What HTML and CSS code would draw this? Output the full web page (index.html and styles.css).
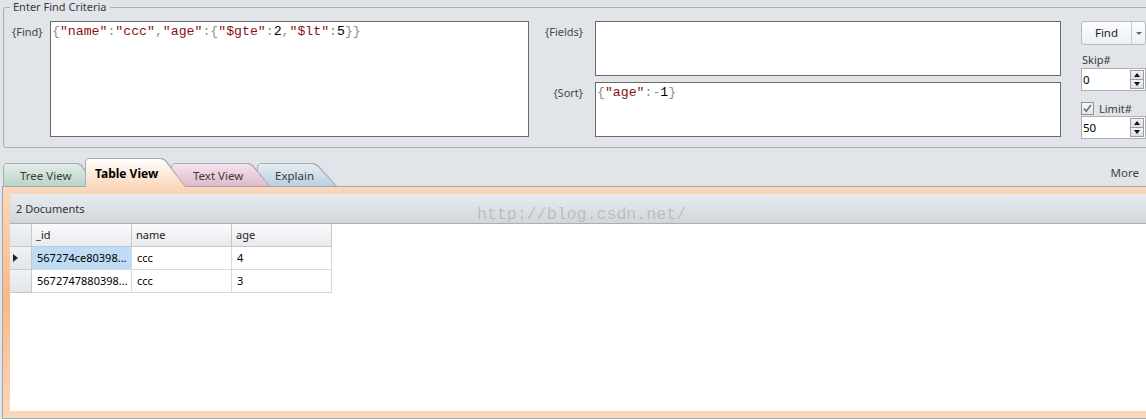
FILE: index.html
```html
<!DOCTYPE html>
<html lang="en">
<head>
<meta charset="utf-8">
<title>Find</title>
<link rel="stylesheet" href="styles.css">
</head>
<body>
<fieldset class="criteria">
  <legend>Enter Find Criteria</legend>
  <div class="criteria-row">
    <div class="find-label">{Find}</div>
    <div class="code-box find-box"><span class="p">{</span><span class="s">"name"</span><span class="p">:</span><span class="s">"ccc"</span><span class="p">,</span><span class="s">"age"</span><span class="p">:{</span><span class="s">"$gte"</span><span class="p">:</span><span class="n">2</span><span class="p">,</span><span class="s">"$lt"</span><span class="p">:</span><span class="n">5</span><span class="p">}}</span></div>
    <div class="side">
      <div class="side-row">
        <div class="side-label">{Fields}</div>
        <div class="code-box side-box"></div>
      </div>
      <div class="side-row">
        <div class="side-label">{Sort}</div>
        <div class="code-box side-box"><span class="p">{</span><span class="s">"age"</span><span class="p">:-</span><span class="n">1</span><span class="p">}</span></div>
      </div>
    </div>
    <div class="controls">
      <div class="find-btn">
        <span class="find-main">Find</span>
        <span class="find-drop"><span class="drop-arrow"></span></span>
      </div>
      <div class="ctl-label">Skip#</div>
      <div class="spin">
        <span class="spin-val">0</span>
        <span class="spin-btns"><span class="spin-b"><span class="tri-up"></span></span><span class="spin-b"><span class="tri-down"></span></span></span>
      </div>
      <div class="limit-row">
        <span class="check"><svg width="11" height="11" viewBox="0 0 11 11"><path d="M2 5.5 L4.3 8.2 L9 2" fill="none" stroke="#6f6f6f" stroke-width="1.6"/></svg></span>
        <span class="limit-text">Limit#</span>
      </div>
      <div class="spin">
        <span class="spin-val">50</span>
        <span class="spin-btns"><span class="spin-b"><span class="tri-up"></span></span><span class="spin-b"><span class="tri-down"></span></span></span>
      </div>
    </div>
  </div>
</fieldset>

<div class="tabstrip">
  <div class="tab tab-tree"><div class="tab-face">Tree View</div></div>
  <div class="tab tab-table"><div class="tab-face">Table View</div></div>
  <div class="tab tab-text"><div class="tab-face">Text View</div></div>
  <div class="tab tab-explain"><div class="tab-face">Explain</div></div>
  <div class="more">More</div>
</div>

<div class="pane">
  <div class="pane-inner">
    <div class="doc-bar">2 Documents<span class="watermark">http://blog.csdn.net/</span></div>
    <div class="grid">
      <div class="gh rh"></div>
      <div class="gh">_id</div>
      <div class="gh">name</div>
      <div class="gh">age</div>

      <div class="rh cur"><span class="row-arrow"></span></div>
      <div class="gc sel">567274ce80398...</div>
      <div class="gc">ccc</div>
      <div class="gc">4</div>

      <div class="rh"></div>
      <div class="gc">5672747880398...</div>
      <div class="gc">ccc</div>
      <div class="gc">3</div>
    </div>
  </div>
</div>
</body>
</html>
```

FILE: styles.css
```css
* { box-sizing: border-box; }
html, body { margin: 0; padding: 0; }
body {
  width: 1146px;
  height: 419px;
  overflow: hidden;
  background: #e1e4e8;
  font-family: "Noto Sans", "Open Sans", sans-serif;
  font-size: 11px;
  color: #333;
}

/* ---------- criteria group ---------- */
.criteria {
  margin: 0 -12px 0 3px;
  border: 1px solid #a9aeb4;
  border-radius: 3px;
  padding: 7px 0 8px 6px;
  min-width: 0;
}
.criteria legend {
  padding: 0 3px;
  line-height: 14px;
  color: #3a3a3a;
}
.criteria-row {
  display: flex;
  align-items: flex-start;
}
.find-label {
  width: 40px;
  padding: 3px 0 0 2px;
  line-height: 15px;
  color: #3b4454;
}
.code-box {
  background: #fff;
  border: 1px solid #6a6a6a;
  font-family: "Liberation Mono", monospace;
  font-size: 13.2px;
  line-height: 15px;
  padding: 2px 0 0 1px;
  white-space: pre;
}
.find-box { width: 479px; height: 116px; }
.p { color: #8a8f96; }
.s { color: #8b1010; }
.n { color: #000; }

.side {
  display: flex;
  flex-direction: column;
  gap: 6px;
}
.side-row { display: flex; align-items: flex-start; }
.side-label {
  width: 66px;
  text-align: right;
  padding: 3px 12px 0 0;
  line-height: 15px;
  color: #4a4a4a;
}
.side-box { width: 466px; height: 55px; }

/* ---------- right controls ---------- */
.controls {
  width: 65px;
  margin-left: 20px;
  display: flex;
  flex-direction: column;
}
.find-btn {
  height: 24px;
  display: flex;
  border: 1px solid #b6bcc2;
  border-radius: 3px;
  background: linear-gradient(#fdfdfe, #eceff2);
}
.find-main {
  width: 50px;
  border-right: 1px solid #c6cbd0;
  text-align: center;
  line-height: 22px;
  font-size: 11.5px;
  color: #222;
}
.find-drop {
  flex: 1;
  display: flex;
  align-items: center;
  justify-content: center;
}
.drop-arrow {
  width: 0; height: 0;
  border-left: 3px solid transparent;
  border-right: 3px solid transparent;
  border-top: 3px solid #666;
}
.ctl-label {
  margin-top: 7px;
  line-height: 16px;
  color: #3a3a3a;
  padding-left: 1px;
}
.spin {
  height: 23px;
  display: flex;
  align-items: center;
  background: #fff;
  border: 1px solid #acb0b6;
  padding: 0 1px 0 1px;
}
.spin-val {
  flex: 1;
  color: #000;
  font-size: 11.5px;
}
.spin-btns {
  display: flex;
  flex-direction: column;
  width: 14px;
  height: 19px;
}
.spin-b {
  flex: 1;
  display: flex;
  align-items: center;
  justify-content: center;
  background: linear-gradient(#f4f4f4, #dedede);
  border: 1px solid #9a9ea3;
}
.spin-b + .spin-b { border-top: none; }
.tri-up, .tri-down {
  width: 0; height: 0;
  border-left: 3px solid transparent;
  border-right: 3px solid transparent;
}
.tri-up { border-bottom: 4px solid #111; }
.tri-down { border-top: 4px solid #111; }

.limit-row {
  margin-top: 11px;
  height: 14px;
  display: flex;
  align-items: flex-start;
  gap: 5px;
}
.check {
  width: 13px;
  height: 13px;
  border: 1px solid #8e9297;
  background: linear-gradient(#f6f6f6, #e6e6e6);
  display: flex;
  align-items: center;
  justify-content: center;
}
.limit-text { line-height: 13px; color: #3a3a3a; }
.limit-row + .spin { margin-top: 0; }

/* ---------- tabs ---------- */
.tabstrip {
  position: relative;
  z-index: 2;
  height: 38px;
  display: flex;
  align-items: flex-end;
  padding-left: 3px;
}
.tab {
  --s: 14px;
  background: #a3adb7;
  clip-path: polygon(0 3px, 3px 0, calc(100% - var(--s) - 3px) 0, calc(100% - var(--s) + 1px) 2px, 100% 100%, 0 100%);
  padding: 1px 1px 0 1px;
}
.tab-face {
  height: 100%;
  clip-path: polygon(0 2px, 2px 0, calc(100% - var(--s) - 3px) 0, calc(100% - var(--s) + 1px) 2px, 100% 100%, 0 100%);
  line-height: 16px;
  font-size: 11.5px;
  color: #3c3c3c;
  white-space: nowrap;
}
.tab-tree {
  width: 92px; height: 23px; z-index: 1;
}
.tab-tree .tab-face {
  background: linear-gradient(#e2ede8, #b9d4c8);
  padding: 4px 0 0 16px;
}
.tab-table {
  --s: 21px;
  width: 101px; height: 29px; z-index: 5;
  margin-left: -10px;
  margin-bottom: -1px;
}
.tab-table .tab-face {
  background: linear-gradient(#fffefd, #fad8bc);
  padding: 7px 0 0 9px;
  font-weight: bold;
  color: #000;
  font-size: 12px;
}
.tab-text {
  --s: 18px;
  width: 99px; height: 23px; z-index: 3;
  margin-left: -15px;
}
.tab-text .tab-face {
  background: linear-gradient(#f4e4eb, #e1b9cb);
  padding: 4px 0 0 21px;
}
.tab-explain {
  --s: 20px;
  width: 80px; height: 23px; z-index: 2;
  margin-left: -13px;
}
.tab-explain .tab-face {
  background: linear-gradient(#e5edf4, #b9cfe0);
  padding: 4px 0 0 17px;
}
.more {
  margin-left: auto;
  align-self: center;
  margin-top: 10px;
  padding-right: 7px;
  font-size: 11.5px;
  color: #444;
}

/* ---------- result pane ---------- */
.pane {
  margin: 0 -12px 0 2px;
  border: 1px solid #9ba7b2;
  padding: 7px 0 7px 7px;
  background: linear-gradient(#fad8bc 0%, #fbb886 50%, #fad8bc 100%);
}
.pane-inner {
  height: 217px;
  background: #fff;
}
.doc-bar {
  position: relative;
  height: 30px;
  line-height: 29px;
  padding-left: 6px;
  background: linear-gradient(#e9ecef, #d2d6da);
  border-bottom: 1px solid #a7b0b8;
  color: #333;
}
.watermark {
  position: absolute;
  left: 467px;
  top: 12px;
  line-height: 18px;
  font-family: "Liberation Mono", monospace;
  font-size: 16.6px;
  color: rgba(120, 120, 120, 0.33);
}
.grid {
  display: grid;
  grid-template-columns: 22px 100px 100px 100px;
  grid-auto-rows: 23px;
  width: 322px;
}
.grid > div {
  border-right: 1px solid #d5dade;
  border-bottom: 1px solid #d5dade;
  padding-left: 5px;
  line-height: 22px;
  white-space: nowrap;
  overflow: hidden;
  color: #000;
}
.grid > .gh {
  background: linear-gradient(#fbfbfc, #e7eaee);
  border-color: #c3c9cf;
  color: #222;
  padding-left: 4px;
}
.grid > .rh {
  background: linear-gradient(#f0f2f4, #e3e6ea);
  border-color: #c3c9cf;
  padding-left: 0;
  display: flex;
  align-items: center;
}
.grid > .sel { background: #bedcf6; }
.row-arrow {
  margin-left: 3px;
  width: 0; height: 0;
  border-top: 4px solid transparent;
  border-bottom: 4px solid transparent;
  border-left: 5px solid #222;
}
```
